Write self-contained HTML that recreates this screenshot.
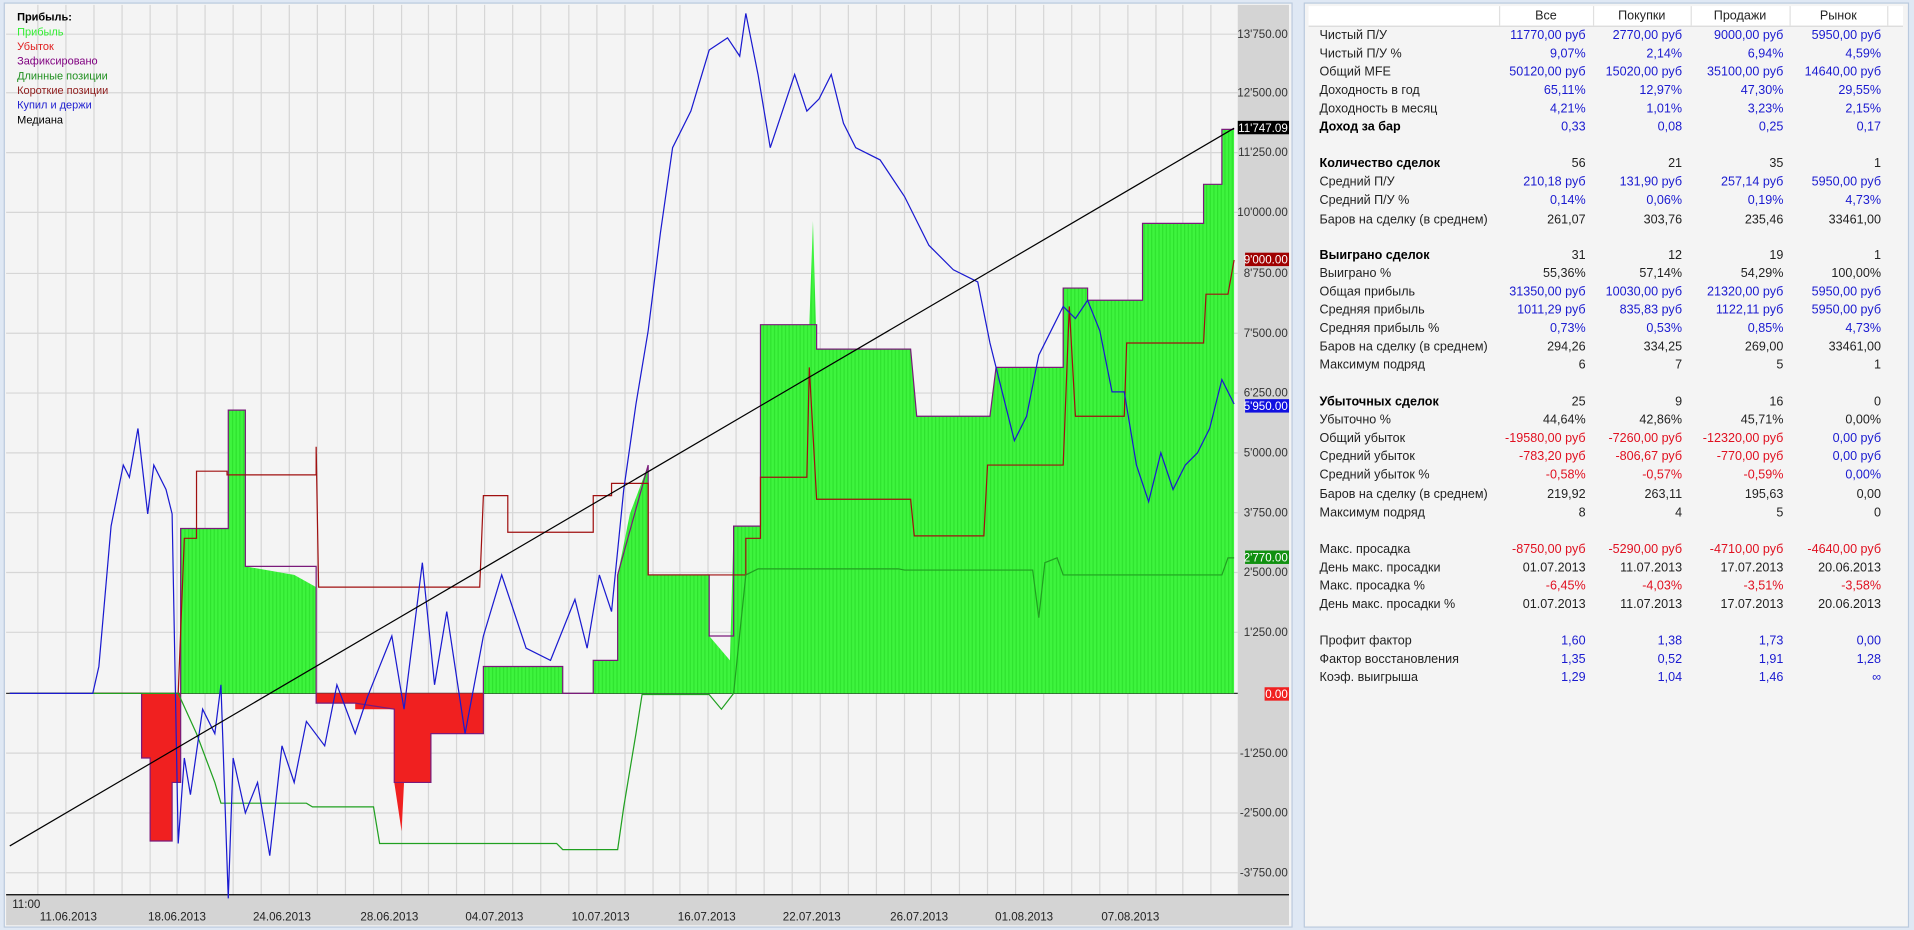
<!DOCTYPE html>
<html><head><meta charset="utf-8">
<style>
html,body{margin:0;padding:0;width:1914px;height:930px;overflow:hidden;background:#dfe8f4;}
#w{position:absolute;left:0;top:0;width:1568px;height:762px;transform:scale(1.22066);transform-origin:0 0;font-family:"Liberation Sans","DejaVu Sans",sans-serif;}
#chart{position:absolute;left:3px;top:2px;width:1054px;height:756px;border:1px solid #b9c9de;background:#f4f4f4;}
#right{position:absolute;left:1068px;top:2px;width:494px;height:756px;border:1px solid #b9c9de;background:#f4f4f4;}
.r{position:absolute;font-size:10.3px;line-height:12px;white-space:nowrap;}
.l{left:12px;color:#222;}
.b{font-weight:bold;color:#000;}
.c{text-align:right;width:100px;}
.c1{left:130px}.c2{left:209px}.c3{left:292px}.c4{left:372px}
.bl{color:#1a1ad0}.rd{color:#e01020}.k{color:#222}
</style></head><body><div id="w">
<div id="chart">
<svg width="1054" height="756" viewBox="3 2 1054 756" style="position:absolute;left:0;top:0" font-family="Liberation Sans, DejaVu Sans, sans-serif">
<defs><pattern id="st" width="3" height="10" patternUnits="userSpaceOnUse"><rect width="3" height="10" fill="#3ef43e"/><rect width="1" height="10" fill="#2ee22e"/></pattern></defs>
<rect x="4" y="3" width="1009" height="729" fill="#f4f4f4"/>
<g stroke="#d6d6d6" stroke-width="1">
<path d="M30 3V732M53 3V732M76 3V732M99 3V732M122 3V732M144 3V732M167 3V732M190 3V732M213 3V732M236 3V732M259 3V732M282 3V732M305 3V732M328 3V732M350 3V732M373 3V732M396 3V732M419 3V732M442 3V732M465 3V732M488 3V732M511 3V732M534 3V732M556 3V732M579 3V732M602 3V732M625 3V732M648 3V732M671 3V732M694 3V732M717 3V732M740 3V732M762 3V732M785 3V732M808 3V732M831 3V732M854 3V732M877 3V732M900 3V732M923 3V732M946 3V732M968 3V732M991 3V732"/>
<path d="M4 27H1013M4 75H1013M4 124H1013M4 173H1013M4 223H1013M4 272H1013M4 321H1013M4 370H1013M4 419H1013M4 468H1013M4 517H1013M4 616H1013M4 665H1013M4 714H1013"/>
</g>
<rect x="1013" y="3" width="42" height="729" fill="#d4d4d4"/>
<rect x="4" y="732" width="1051" height="25" fill="#d4d4d4"/>
<line x1="4" y1="732" x2="1055" y2="732" stroke="#000"/>
<line x1="4" y1="567" x2="1013" y2="567" stroke="#333"/>
<path fill="url(#st)" d="M147,567 L147,432 L186,432 L186,335 L200,335 L200,463 L240,470 L258,480 L258,567 Z M395,567 L395,545 L460,545 L460,567 Z M485,567 L485,540 L505,540 L505,470 L515,420 L530,380 L530,470 L580,470 L580,520 L597,540 L600,430 L622,430 L622,265 L662,265 L665,180 L668,285 L745,285 L750,340 L810,340 L815,300 L870,300 L870,235 L890,235 L890,245 L935,245 L935,182 L985,182 L985,150 L1000,150 L1000,105 L1010,105 L1010,567 Z"/>
<path fill="#f02020" d="M115,567 L115,620 L122,620 L122,688 L140,688 L140,640 L147,640 L147,567Z M258,567 L258,575 L290,575 L290,580 L322,580 L322,640 L328,680 L330,640 L352,640 L352,600 L395,600 L395,567Z"/>
<polyline fill="none" stroke="#7a1a7a" stroke-width="1" points="7,567 115,567 115,620 122,620 122,688 140,688 140,640 147,640 147,432 186,432 186,335 200,335 200,463 258,463 258,575 290,575 322,580 322,640 352,640 352,600 395,600 395,545 460,545 460,567 485,567 485,540 505,540 505,470 530,380 530,470 580,470 580,520 600,520 600,430 622,430 622,265 668,265 668,285 745,285 750,340 810,340 815,300 870,300 870,235 890,235 890,245 935,245 935,182 985,182 985,150 1000,150 1000,105 1010,105"/>
<polyline fill="none" stroke="#a01010" stroke-width="1" points="7,567 145,567 150,440 160,440 160,385 185,385 185,388 258,388 258,365 260,480 320,480 392,480 395,405 415,405 415,435 485,435 485,405 500,405 500,395 530,395 530,470 610,470 610,440 622,440 622,390 660,390 662,300 668,408 745,408 748,438 805,438 808,380 870,380 875,250 880,340 920,340 922,280 985,280 987,240 1005,240 1010,212"/>
<polyline fill="none" stroke="#20a020" stroke-width="1" points="7,567 145,567 160,600 175,640 180,657 250,657 255,660 305,660 310,690 455,690 460,695 505,695 510,660 520,600 525,568 580,568 590,580 600,567 610,470 620,465 735,465 740,466 845,466 850,505 855,460 865,456 870,470 1000,470 1005,456 1010,456"/>
<polyline fill="none" stroke="#1a1ad0" stroke-width="1" points="7,567 75,567 80,545 90,430 100,380 105,390 112,350 120,420 125,380 135,400 140,420 145,690 150,620 155,650 165,580 175,600 180,560 186,735 190,620 200,665 210,640 220,700 230,610 240,640 250,590 265,610 275,560 290,600 300,570 320,520 330,580 345,460 355,560 365,500 380,600 395,520 410,470 430,530 450,540 470,490 480,530 490,470 500,500 510,400 520,330 530,270 540,190 550,120 565,90 580,40 595,30 605,45 610,10 620,60 630,120 640,90 650,60 660,90 670,80 680,60 690,100 700,120 720,130 740,160 760,200 780,220 800,230 810,280 820,320 830,360 840,340 850,290 860,270 870,250 880,260 890,245 900,270 910,320 920,320 930,380 940,410 950,370 960,400 970,380 980,370 990,350 1000,310 1010,330"/>
<line x1="7" y1="692" x2="1010" y2="104" stroke="#000" stroke-width="1"/>
<g font-size="9.5" fill="#333" text-anchor="end">
<text x="1054" y="30">13'750.00</text><text x="1054" y="78">12'500.00</text><text x="1054" y="127">11'250.00</text><text x="1054" y="176">10'000.00</text><text x="1054" y="226">8'750.00</text><text x="1054" y="275">7'500.00</text><text x="1054" y="324">6'250.00</text><text x="1054" y="373">5'000.00</text><text x="1054" y="422">3'750.00</text><text x="1054" y="471">2'500.00</text><text x="1054" y="520">1'250.00</text><text x="1054" y="619">-1'250.00</text><text x="1054" y="668">-2'500.00</text><text x="1054" y="717">-3'750.00</text>
</g>
<rect x="1013" y="98" width="42" height="11" fill="#000"/><text x="1054" y="107" font-size="9.5" fill="#fff" text-anchor="end">11'747.09</text>
<rect x="1019" y="206" width="36" height="11" fill="#a00000"/><text x="1054" y="215" font-size="9.5" fill="#fff" text-anchor="end">9'000.00</text>
<rect x="1019" y="326" width="36" height="11" fill="#1010e0"/><text x="1054" y="335" font-size="9.5" fill="#fff" text-anchor="end">5'950.00</text>
<rect x="1019" y="450" width="36" height="11" fill="#109010"/><text x="1054" y="459" font-size="9.5" fill="#fff" text-anchor="end">2'770.00</text>
<rect x="1035" y="562" width="20" height="11" fill="#f02020"/><text x="1054" y="571" font-size="9.5" fill="#fff" text-anchor="end">0.00</text>
<g font-size="9.5" fill="#222">
<text x="9" y="743">11:00</text>
<g text-anchor="middle"><text x="55" y="753">11.06.2013</text><text x="144" y="753">18.06.2013</text><text x="230" y="753">24.06.2013</text><text x="318" y="753">28.06.2013</text><text x="404" y="753">04.07.2013</text><text x="491" y="753">10.07.2013</text><text x="578" y="753">16.07.2013</text><text x="664" y="753">22.07.2013</text><text x="752" y="753">26.07.2013</text><text x="838" y="753">01.08.2013</text><text x="925" y="753">07.08.2013</text></g>
</g>
<g font-size="9">
<text x="13" y="16" font-weight="bold" fill="#000">Прибыль:</text>
<text x="13" y="28" fill="#33ee33">Прибыль</text>
<text x="13" y="40" fill="#e02020">Убыток</text>
<text x="13" y="52" fill="#800080">Зафиксировано</text>
<text x="13" y="64" fill="#209020">Длинные позиции</text>
<text x="13" y="76" fill="#902020">Короткие позиции</text>
<text x="13" y="88" fill="#2020d0">Купил и держи</text>
<text x="13" y="100" fill="#000">Медиана</text>
</g>
</svg>
</div>
<div id="right">
<div style="position:absolute;left:3px;top:2px;width:487px;height:16px;background:#fff;border-bottom:1px solid #d8d8d8"></div>
<div style="position:absolute;left:159px;top:2px;width:1px;height:16px;background:#e0e0e0"></div>
<div style="position:absolute;left:236px;top:2px;width:1px;height:16px;background:#e0e0e0"></div>
<div style="position:absolute;left:316px;top:2px;width:1px;height:16px;background:#e0e0e0"></div>
<div style="position:absolute;left:397px;top:2px;width:1px;height:16px;background:#e0e0e0"></div>
<div style="position:absolute;left:477px;top:2px;width:1px;height:16px;background:#e0e0e0"></div>
<div class="r k" style="top:5px;left:159px;width:77px;text-align:center">Все</div>
<div class="r k" style="top:5px;left:236px;width:80px;text-align:center">Покупки</div>
<div class="r k" style="top:5px;left:316px;width:81px;text-align:center">Продажи</div>
<div class="r k" style="top:5px;left:397px;width:80px;text-align:center">Рынок</div>

<div class="r l" style="top:21px">Чистый П/У</div><div class="r c c1 bl" style="top:21px">11770,00 руб</div><div class="r c c2 bl" style="top:21px">2770,00 руб</div><div class="r c c3 bl" style="top:21px">9000,00 руб</div><div class="r c c4 bl" style="top:21px">5950,00 руб</div>
<div class="r l" style="top:36px">Чистый П/У %</div><div class="r c c1 bl" style="top:36px">9,07%</div><div class="r c c2 bl" style="top:36px">2,14%</div><div class="r c c3 bl" style="top:36px">6,94%</div><div class="r c c4 bl" style="top:36px">4,59%</div>
<div class="r l" style="top:51px">Общий MFE</div><div class="r c c1 bl" style="top:51px">50120,00 руб</div><div class="r c c2 bl" style="top:51px">15020,00 руб</div><div class="r c c3 bl" style="top:51px">35100,00 руб</div><div class="r c c4 bl" style="top:51px">14640,00 руб</div>
<div class="r l" style="top:66px">Доходность в год</div><div class="r c c1 bl" style="top:66px">65,11%</div><div class="r c c2 bl" style="top:66px">12,97%</div><div class="r c c3 bl" style="top:66px">47,30%</div><div class="r c c4 bl" style="top:66px">29,55%</div>
<div class="r l" style="top:81px">Доходность в месяц</div><div class="r c c1 bl" style="top:81px">4,21%</div><div class="r c c2 bl" style="top:81px">1,01%</div><div class="r c c3 bl" style="top:81px">3,23%</div><div class="r c c4 bl" style="top:81px">2,15%</div>
<div class="r l b" style="top:96px">Доход за бар</div><div class="r c c1 bl" style="top:96px">0,33</div><div class="r c c2 bl" style="top:96px">0,08</div><div class="r c c3 bl" style="top:96px">0,25</div><div class="r c c4 bl" style="top:96px">0,17</div>

<div class="r l b" style="top:126px">Количество сделок</div><div class="r c c1 k" style="top:126px">56</div><div class="r c c2 k" style="top:126px">21</div><div class="r c c3 k" style="top:126px">35</div><div class="r c c4 k" style="top:126px">1</div>
<div class="r l" style="top:141px">Средний П/У</div><div class="r c c1 bl" style="top:141px">210,18 руб</div><div class="r c c2 bl" style="top:141px">131,90 руб</div><div class="r c c3 bl" style="top:141px">257,14 руб</div><div class="r c c4 bl" style="top:141px">5950,00 руб</div>
<div class="r l" style="top:156px">Средний П/У %</div><div class="r c c1 bl" style="top:156px">0,14%</div><div class="r c c2 bl" style="top:156px">0,06%</div><div class="r c c3 bl" style="top:156px">0,19%</div><div class="r c c4 bl" style="top:156px">4,73%</div>
<div class="r l" style="top:172px">Баров на сделку (в среднем)</div><div class="r c c1 k" style="top:172px">261,07</div><div class="r c c2 k" style="top:172px">303,76</div><div class="r c c3 k" style="top:172px">235,46</div><div class="r c c4 k" style="top:172px">33461,00</div>

<div class="r l b" style="top:201px">Выиграно сделок</div><div class="r c c1 k" style="top:201px">31</div><div class="r c c2 k" style="top:201px">12</div><div class="r c c3 k" style="top:201px">19</div><div class="r c c4 k" style="top:201px">1</div>
<div class="r l" style="top:216px">Выиграно %</div><div class="r c c1 k" style="top:216px">55,36%</div><div class="r c c2 k" style="top:216px">57,14%</div><div class="r c c3 k" style="top:216px">54,29%</div><div class="r c c4 k" style="top:216px">100,00%</div>
<div class="r l" style="top:231px">Общая прибыль</div><div class="r c c1 bl" style="top:231px">31350,00 руб</div><div class="r c c2 bl" style="top:231px">10030,00 руб</div><div class="r c c3 bl" style="top:231px">21320,00 руб</div><div class="r c c4 bl" style="top:231px">5950,00 руб</div>
<div class="r l" style="top:246px">Средняя прибыль</div><div class="r c c1 bl" style="top:246px">1011,29 руб</div><div class="r c c2 bl" style="top:246px">835,83 руб</div><div class="r c c3 bl" style="top:246px">1122,11 руб</div><div class="r c c4 bl" style="top:246px">5950,00 руб</div>
<div class="r l" style="top:261px">Средняя прибыль %</div><div class="r c c1 bl" style="top:261px">0,73%</div><div class="r c c2 bl" style="top:261px">0,53%</div><div class="r c c3 bl" style="top:261px">0,85%</div><div class="r c c4 bl" style="top:261px">4,73%</div>
<div class="r l" style="top:276px">Баров на сделку (в среднем)</div><div class="r c c1 k" style="top:276px">294,26</div><div class="r c c2 k" style="top:276px">334,25</div><div class="r c c3 k" style="top:276px">269,00</div><div class="r c c4 k" style="top:276px">33461,00</div>
<div class="r l" style="top:291px">Максимум подряд</div><div class="r c c1 k" style="top:291px">6</div><div class="r c c2 k" style="top:291px">7</div><div class="r c c3 k" style="top:291px">5</div><div class="r c c4 k" style="top:291px">1</div>

<div class="r l b" style="top:321px">Убыточных сделок</div><div class="r c c1 k" style="top:321px">25</div><div class="r c c2 k" style="top:321px">9</div><div class="r c c3 k" style="top:321px">16</div><div class="r c c4 k" style="top:321px">0</div>
<div class="r l" style="top:336px">Убыточно %</div><div class="r c c1 k" style="top:336px">44,64%</div><div class="r c c2 k" style="top:336px">42,86%</div><div class="r c c3 k" style="top:336px">45,71%</div><div class="r c c4 k" style="top:336px">0,00%</div>
<div class="r l" style="top:351px">Общий убыток</div><div class="r c c1 rd" style="top:351px">-19580,00 руб</div><div class="r c c2 rd" style="top:351px">-7260,00 руб</div><div class="r c c3 rd" style="top:351px">-12320,00 руб</div><div class="r c c4 bl" style="top:351px">0,00 руб</div>
<div class="r l" style="top:366px">Средний убыток</div><div class="r c c1 rd" style="top:366px">-783,20 руб</div><div class="r c c2 rd" style="top:366px">-806,67 руб</div><div class="r c c3 rd" style="top:366px">-770,00 руб</div><div class="r c c4 bl" style="top:366px">0,00 руб</div>
<div class="r l" style="top:381px">Средний убыток %</div><div class="r c c1 rd" style="top:381px">-0,58%</div><div class="r c c2 rd" style="top:381px">-0,57%</div><div class="r c c3 rd" style="top:381px">-0,59%</div><div class="r c c4 bl" style="top:381px">0,00%</div>
<div class="r l" style="top:397px">Баров на сделку (в среднем)</div><div class="r c c1 k" style="top:397px">219,92</div><div class="r c c2 k" style="top:397px">263,11</div><div class="r c c3 k" style="top:397px">195,63</div><div class="r c c4 k" style="top:397px">0,00</div>
<div class="r l" style="top:412px">Максимум подряд</div><div class="r c c1 k" style="top:412px">8</div><div class="r c c2 k" style="top:412px">4</div><div class="r c c3 k" style="top:412px">5</div><div class="r c c4 k" style="top:412px">0</div>

<div class="r l" style="top:442px">Макс. просадка</div><div class="r c c1 rd" style="top:442px">-8750,00 руб</div><div class="r c c2 rd" style="top:442px">-5290,00 руб</div><div class="r c c3 rd" style="top:442px">-4710,00 руб</div><div class="r c c4 rd" style="top:442px">-4640,00 руб</div>
<div class="r l" style="top:457px">День макс. просадки</div><div class="r c c1 k" style="top:457px">01.07.2013</div><div class="r c c2 k" style="top:457px">11.07.2013</div><div class="r c c3 k" style="top:457px">17.07.2013</div><div class="r c c4 k" style="top:457px">20.06.2013</div>
<div class="r l" style="top:472px">Макс. просадка %</div><div class="r c c1 rd" style="top:472px">-6,45%</div><div class="r c c2 rd" style="top:472px">-4,03%</div><div class="r c c3 rd" style="top:472px">-3,51%</div><div class="r c c4 rd" style="top:472px">-3,58%</div>
<div class="r l" style="top:487px">День макс. просадки %</div><div class="r c c1 k" style="top:487px">01.07.2013</div><div class="r c c2 k" style="top:487px">11.07.2013</div><div class="r c c3 k" style="top:487px">17.07.2013</div><div class="r c c4 k" style="top:487px">20.06.2013</div>

<div class="r l" style="top:517px">Профит фактор</div><div class="r c c1 bl" style="top:517px">1,60</div><div class="r c c2 bl" style="top:517px">1,38</div><div class="r c c3 bl" style="top:517px">1,73</div><div class="r c c4 bl" style="top:517px">0,00</div>
<div class="r l" style="top:532px">Фактор восстановления</div><div class="r c c1 bl" style="top:532px">1,35</div><div class="r c c2 bl" style="top:532px">0,52</div><div class="r c c3 bl" style="top:532px">1,91</div><div class="r c c4 bl" style="top:532px">1,28</div>
<div class="r l" style="top:547px">Коэф. выигрыша</div><div class="r c c1 bl" style="top:547px">1,29</div><div class="r c c2 bl" style="top:547px">1,04</div><div class="r c c3 bl" style="top:547px">1,46</div><div class="r c c4 bl" style="top:547px">∞</div>
</div>
</div></body></html>
